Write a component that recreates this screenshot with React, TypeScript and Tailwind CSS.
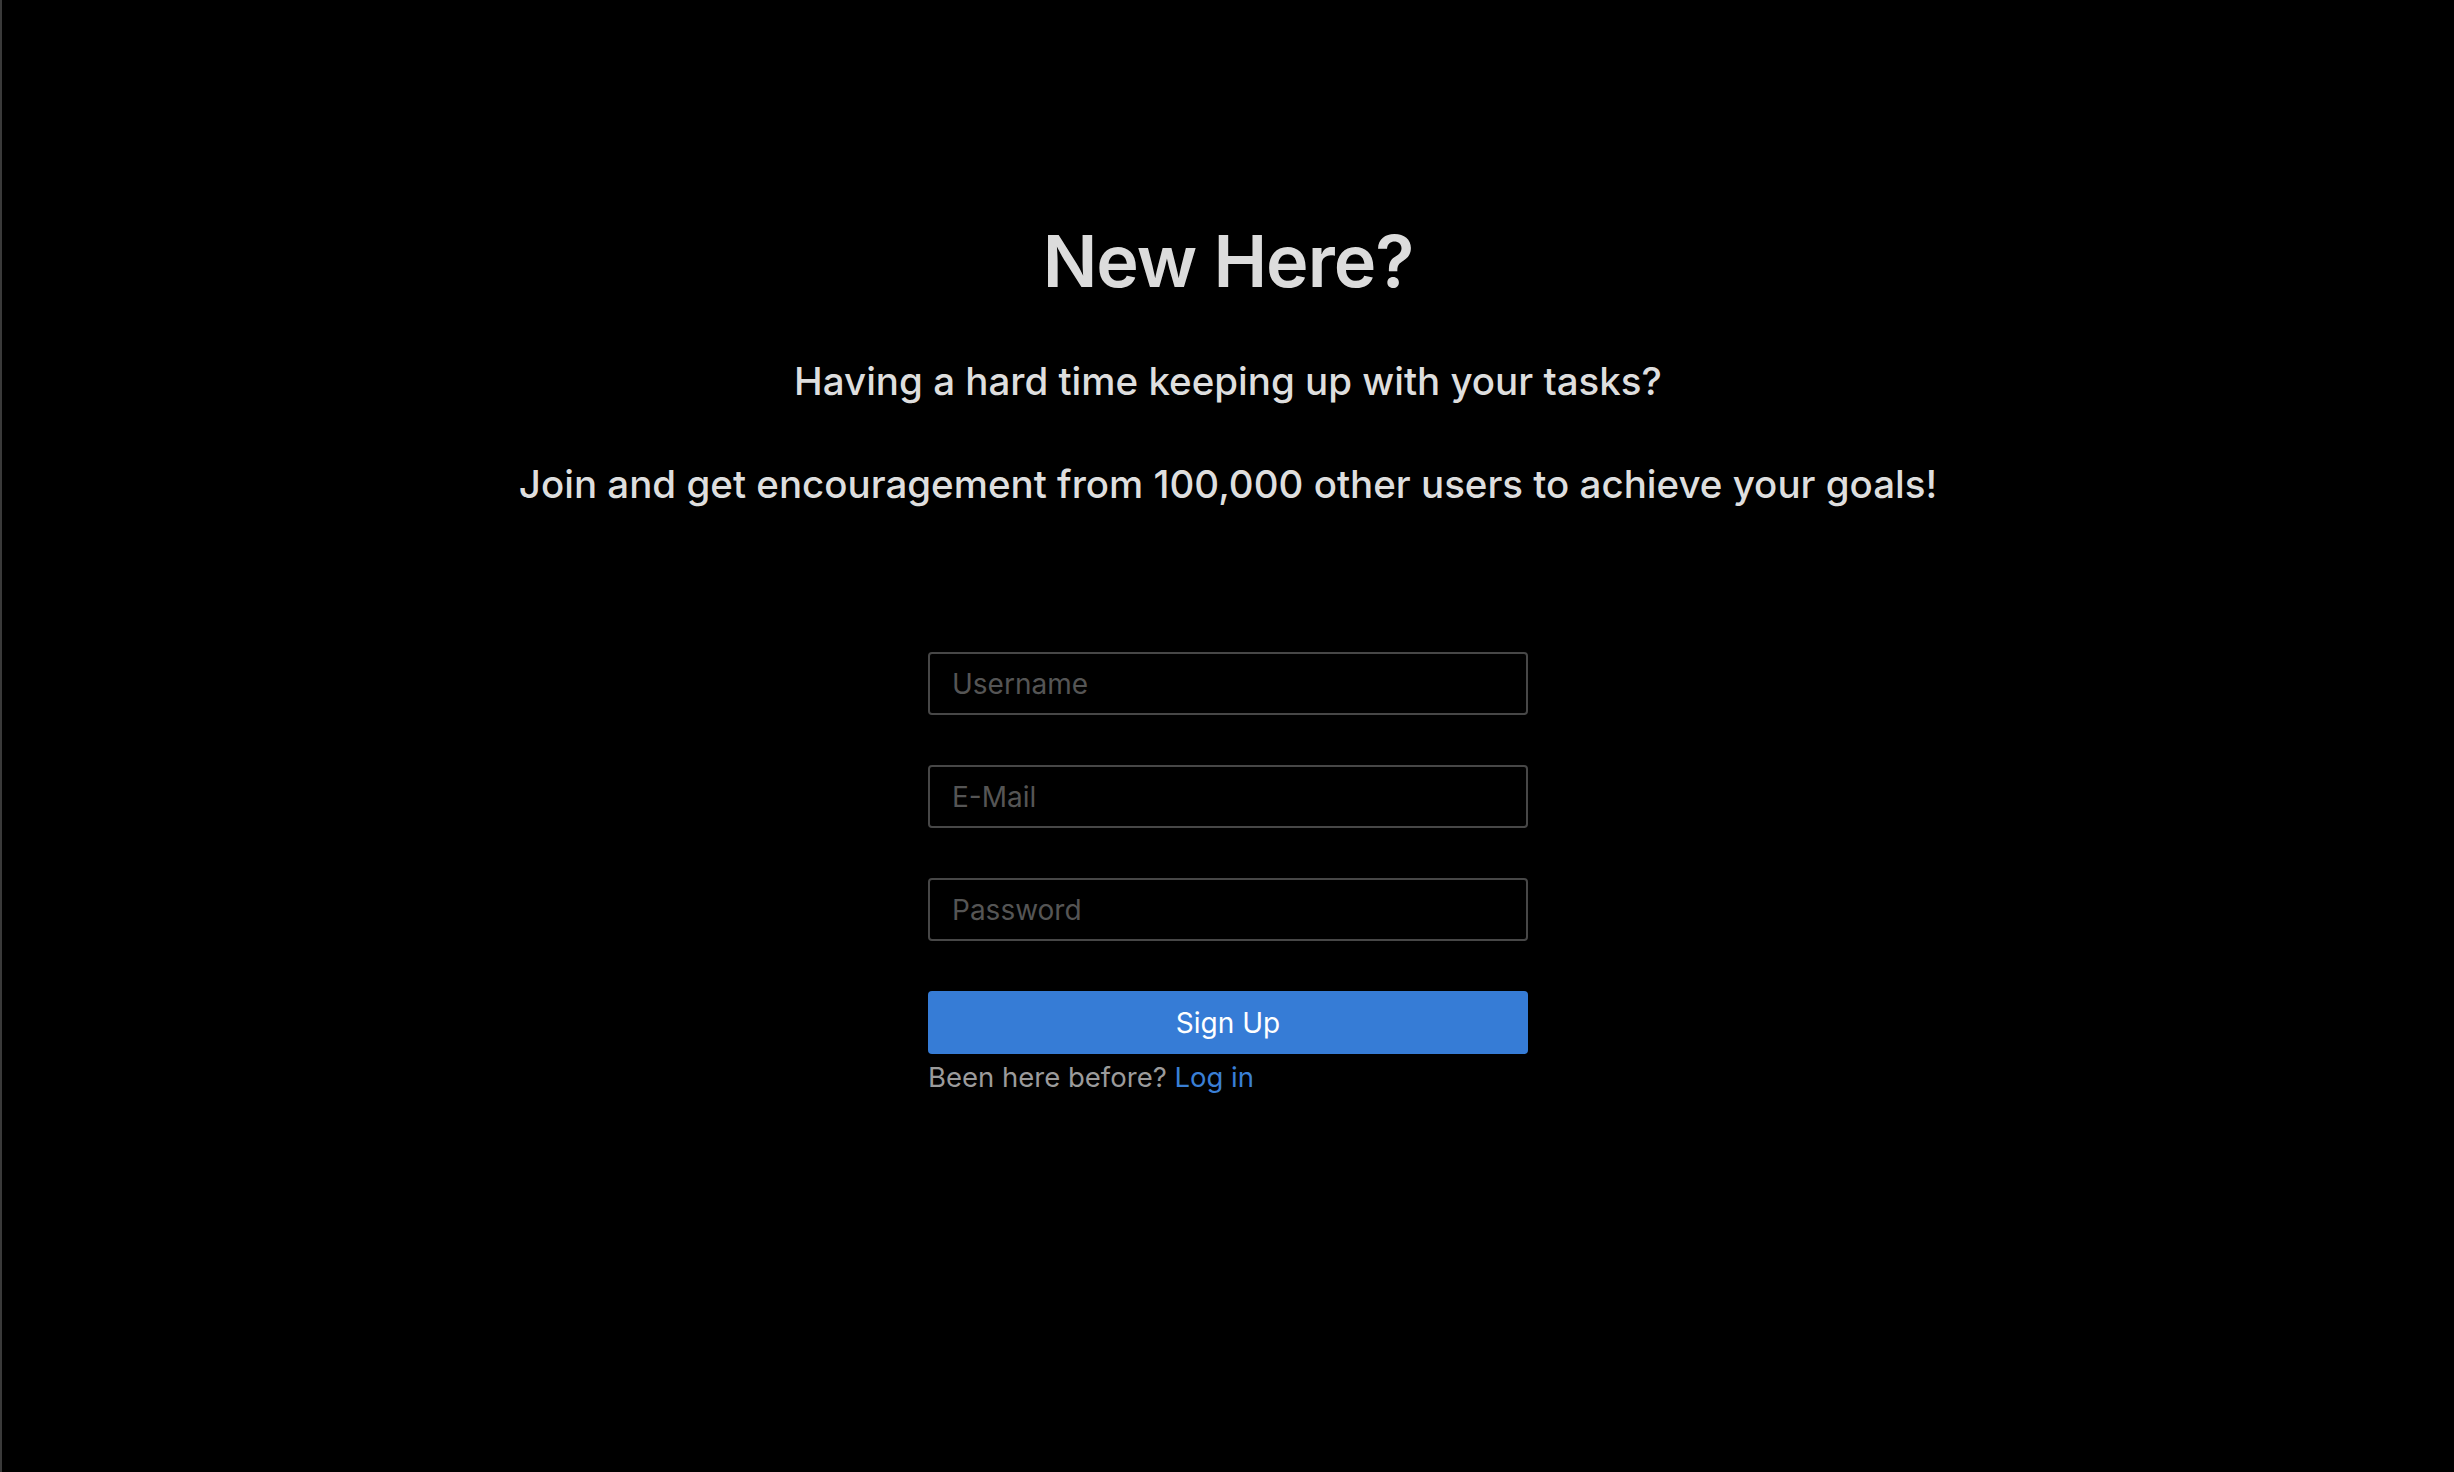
export default function App() {
  const font = { fontFamily: 'Inter, "Noto Sans", sans-serif' };
  return (
    <div
      className="min-h-[1472px] w-full bg-black border-l-2 border-[#3a3a3a] flex flex-col items-center"
      style={font}
    >
      <h1 className="mt-[216px] text-[72px] leading-[90px] font-semibold text-[#dcdcdc] tracking-[-1px]">
        New Here?
      </h1>
      <p className="mt-[52px] text-[38.5px] leading-[46px] font-medium text-[#dedede]">
        Having a hard time keeping up with your tasks?
      </p>
      <p className="mt-[57px] text-[38.5px] leading-[46px] font-medium text-[#dedede]">
        Join and get encouragement from 100,000 other users to achieve your goals!
      </p>
      <form className="mt-[145px] w-[600px] flex flex-col" onSubmit={(e) => e.preventDefault()}>
        {["Username", "E-Mail", "Password"].map((p) => (
          <input
            key={p}
            type={p === "Password" ? "password" : "text"}
            placeholder={p}
            className="h-[63px] mb-[50px] w-full rounded-[4px] border-2 border-[#474747] bg-black px-[22px] text-[28px] text-[#dedede] placeholder:text-[#555555] outline-none"
            style={font}
          />
        ))}
        <button
          type="submit"
          className="h-[63px] w-full rounded-[4px] bg-[#367cd6] text-[28px] text-white"
          style={font}
        >
          Sign Up
        </button>
        <p className="mt-[4px] text-[27.5px] leading-[38px] text-[#9b9b9b]">
          Been here before? <a href="#" className="text-[#3a7fd5]">Log in</a>
        </p>
      </form>
    </div>
  );
}
